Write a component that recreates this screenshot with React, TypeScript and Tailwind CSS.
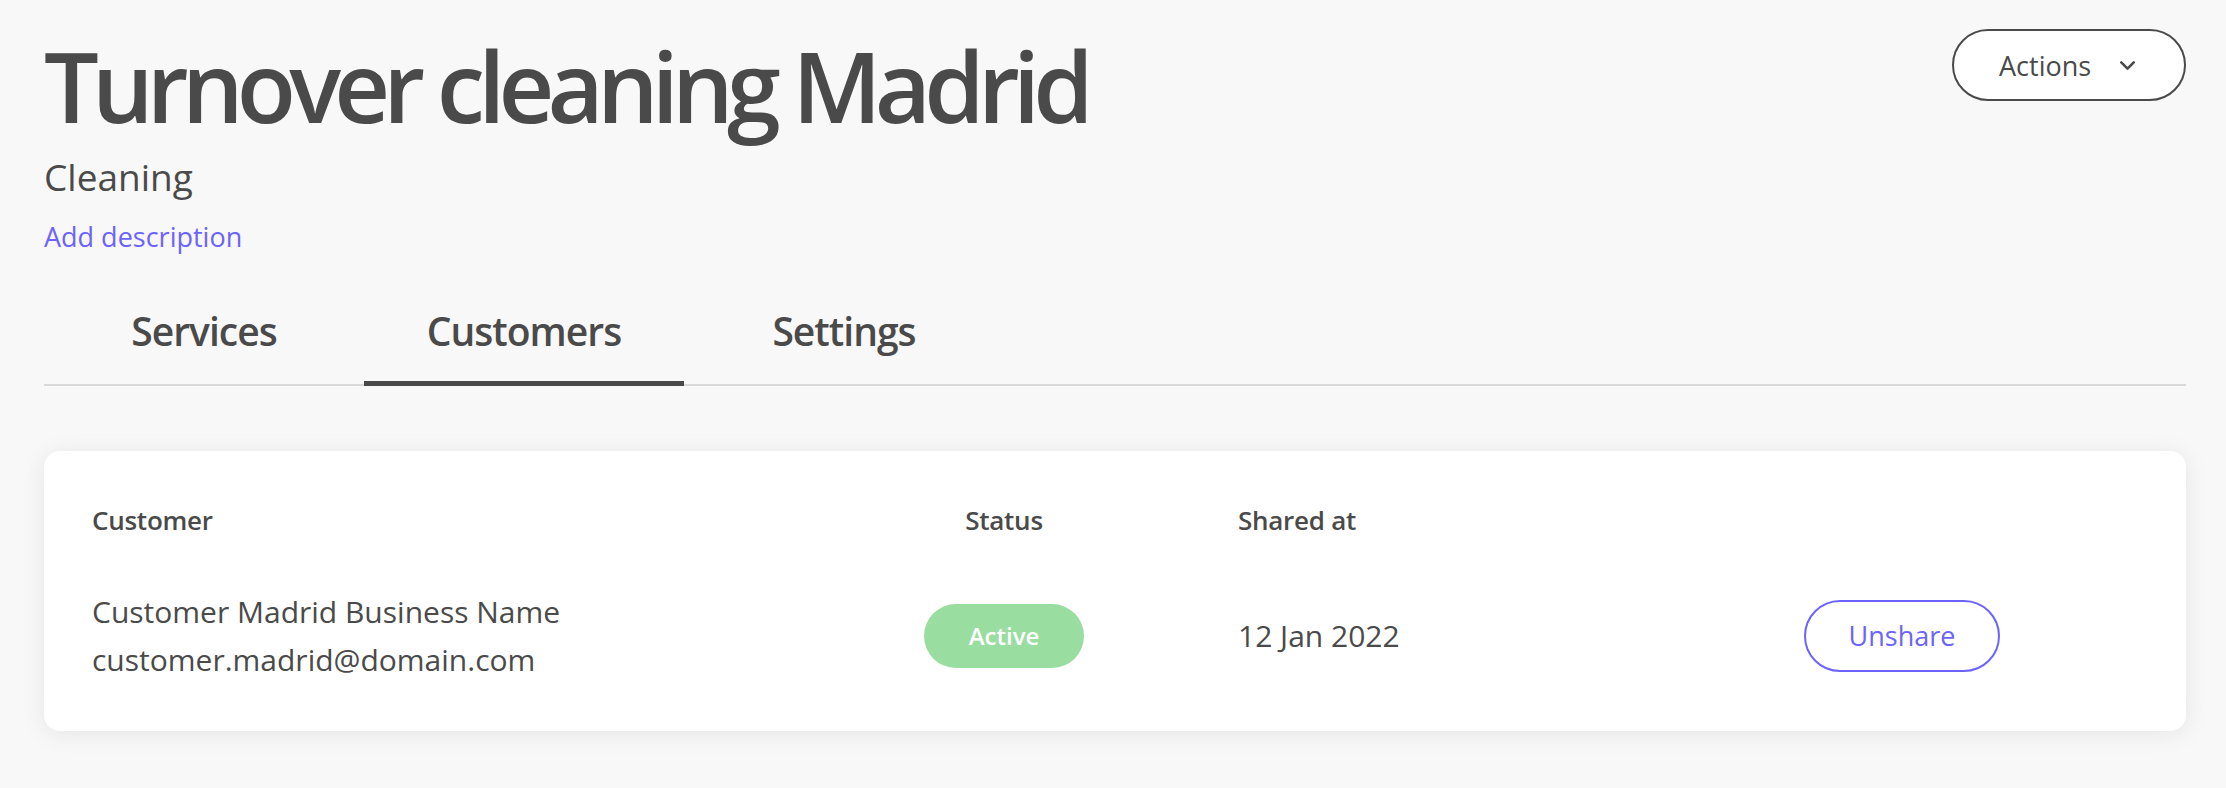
import { ChevronDown } from "lucide-react";

const tabs = ["Services", "Customers", "Settings"];

const App = () => {
  const activeTab = "Customers";

  return (
    <div className="min-h-screen bg-[#f8f8f8] pl-[44px] pr-[40px] pt-[29px] pb-10 font-['Open_Sans',sans-serif] text-[#4a4a4a]">
      {/* header */}
      <div className="flex items-start justify-between">
        <div>
          <h1 className="mt-[6px] text-[97px] leading-[100px] font-semibold tracking-[-0.07em]">
            Turnover cleaning Madrid
          </h1>
          <p className="mt-[17px] text-[37px] leading-[50px]">Cleaning</p>
          <button className="mt-[15px] block text-[27px] leading-[40px] text-[#6c63ff]">
            Add description
          </button>
        </div>
        <button className="flex h-[72px] w-[234px] items-center rounded-full border-2 border-[#4a4a4a] bg-white pl-[45px] text-[27px] leading-[36px]">
          <span className="mt-[2px]">Actions</span>
          <ChevronDown className="ml-[24px] h-[25px] w-[25px]" strokeWidth={2.5} />
        </button>
      </div>

      {/* tabs */}
      <div className="mt-[48px] flex border-b-2 border-[#d9d9d9]">
        {tabs.map((tab) => (
          <button
            key={tab}
            className={
              tab === activeTab
                ? "-mb-[2px] w-[320px] border-b-[5px] border-[#4a4a4a] pb-[24px] text-center text-[39px] leading-[52px] font-semibold tracking-[-0.025em]"
                : "-mb-[2px] w-[320px] border-b-[5px] border-transparent pb-[24px] text-center text-[39px] leading-[52px] font-semibold tracking-[-0.025em]"
            }
          >
            {tab}
          </button>
        ))}
      </div>

      {/* customers card */}
      <div className="mt-[65px] rounded-[16px] bg-white pl-[48px] pt-[51px] pb-[47px] shadow-[0_3px_24px_rgba(0,0,0,0.08)]">
        <div className="grid grid-cols-[832px_160px_720px_196px] text-[26px] leading-[36px] font-semibold tracking-[-0.01em]">
          <div>Customer</div>
          <div className="text-center">Status</div>
          <div className="pl-[154px]">Shared at</div>
          <div />
        </div>
        <div className="mt-[50px] grid grid-cols-[832px_160px_720px_196px] items-center text-[30px] leading-[48px]">
          <div>
            <div>Customer Madrid Business Name</div>
            <div>customer.madrid@domain.com</div>
          </div>
          <div className="flex h-[64px] items-center justify-center rounded-full bg-[#99dda1] text-[24px] font-semibold text-white">
            Active
          </div>
          <div className="pl-[154px]">12 Jan 2022</div>
          <button className="h-[72px] rounded-full border-2 border-[#6c63ff] text-[27px] text-[#6c63ff]">
            Unshare
          </button>
        </div>
      </div>
    </div>
  );
};

export default App;
